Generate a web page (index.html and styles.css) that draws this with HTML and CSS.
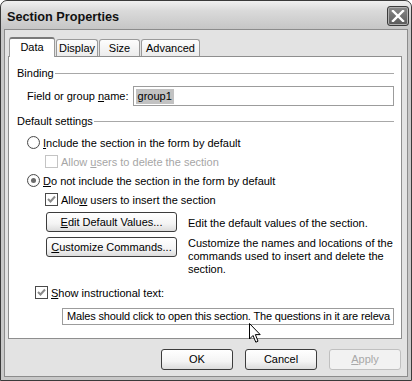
FILE: index.html
```html
<!DOCTYPE html>
<html>
<head>
<meta charset="utf-8">
<link rel="stylesheet" href="styles.css">
</head>
<body>
<div class="window">
  <div class="titlebar">
    <span class="title">Section Properties</span>
    <span class="close"><svg width="14" height="12" viewBox="0 0 14 12"><path d="M2 1 L12 11 M12 1 L2 11" stroke="#fff" stroke-width="2.4" stroke-linecap="square" fill="none"/></svg></span>
  </div>
  <div class="client">
    <div class="tabs">
      <div class="tab active t-data">Data</div>
      <div class="tab t-display">Display</div>
      <div class="tab t-size">Size</div>
      <div class="tab t-adv">Advanced</div>
    </div>
    <div class="panel">
      <div class="group">Binding</div>
      <div class="field-row">
        <span class="field-label">Field or group <u>n</u>ame:</span>
        <div class="input"><span class="sel">group1</span></div>
      </div>
      <div class="group group-default">Default settings</div>
      <div class="options">
        <div class="opt"><span class="radio"></span><span><u>I</u>nclude the section in the form by default</span></div>
        <div class="opt sub disabled"><span class="check"></span><span>Allow <u>u</u>sers to delete the section</span></div>
        <div class="opt"><span class="radio on"></span><span><u>D</u>o not include the section in the form by default</span></div>
        <div class="opt sub"><span class="check on"><svg width="11" height="11" viewBox="0 0 11 11"><path d="M2 5 L4.5 7.5 L9 2.5" stroke="#8a8a8a" stroke-width="2" fill="none"/></svg></span><span>Allo<u>w</u> users to insert the section</span></div>
      </div>
      <div class="cmds">
        <button class="btn"><u>E</u>dit Default Values...</button>
        <p class="desc desc-one">Edit the default values of the section.</p>
        <button class="btn"><u>C</u>ustomize Commands...</button>
        <p class="desc">Customize the names and locations of the commands used to insert and delete the section.</p>
      </div>
      <div class="opt sub show"><span class="check on"><svg width="11" height="11" viewBox="0 0 11 11"><path d="M2 5 L4.5 7.5 L9 2.5" stroke="#8a8a8a" stroke-width="2" fill="none"/></svg></span><span><u>S</u>how instructional text:</span></div>
      <div class="textbox"><span class="tb-text">Males should click to open this section. The questions in it are releva</span></div>
    </div>
    <div class="footer">
      <button class="btn dlg">OK</button>
      <button class="btn dlg">Cancel</button>
      <button class="btn dlg off"><u>A</u>pply</button>
    </div>
  </div>
  <svg class="cursor" width="13" height="21" viewBox="0 0 13 21"><path d="M0.5 0.5 L0.5 16 L4 12.5 L6.8 19.2 L9 18.2 L6.4 11.6 L11.2 11.6 Z" fill="#fff" stroke="#000" stroke-width="1"/></svg>
</div>
</body>
</html>
```
FILE: styles.css
```css
* { box-sizing: border-box; }
body {
  margin: 0;
  background: #fff;
  font-family: "Liberation Sans", Arial, sans-serif;
  font-size: 11px;
  color: #000;
}
.window {
  position: relative;
  width: 412px;
  height: 381px;
  border: 1px solid #3a3a3a;
  border-radius: 7px 7px 0 0;
  background: #c8c8c8;
  display: flex;
  flex-direction: column;
  padding: 0 3px 3px;
  overflow: hidden;
}
.titlebar {
  height: 28px;
  margin: 0 -3px;
  padding: 0 2px 0 6px;
  display: flex;
  align-items: center;
  justify-content: space-between;
  background: linear-gradient(#f0f0f0 0%, #dadada 35%, #c6c6c6 100%);
  border-radius: 6px 6px 0 0;
}
.title {
  font-weight: bold;
  font-size: 12.7px;
  line-height: 15px;
  margin-top: 5px;
  color: #111;
}
.close {
  width: 22px;
  height: 20px;
  margin-top: 2px;
  border: 1px solid #3c3c3c;
  border-radius: 3px;
  background: linear-gradient(#8a8a8a, #5a5a5a);
  box-shadow: inset 0 0 0 1px #b0b0b0;
  display: flex;
  align-items: center;
  justify-content: center;
}
.client {
  flex: 1;
  background: #e3e3e3;
  border: 1px solid #8c8c8c;
  padding: 7px 5px 0 3px;
  display: flex;
  flex-direction: column;
}
.tabs {
  display: flex;
  align-items: flex-end;
  gap: 1px;
  height: 19px;
  padding-left: 1px;
  position: relative;
  z-index: 1;
}
.tab {
  height: 17px;
  border: 1px solid #9a9a9a;
  border-bottom: none;
  border-radius: 3px 3px 0 0;
  background: linear-gradient(#fdfdfd, #ececec);
  display: flex;
  align-items: center;
  justify-content: center;
  line-height: 13px;
}
.tab.active {
  height: 20px;
  margin-bottom: -1px;
  background: #fff;
  border-top: 2px solid #7a7a7a;
  padding-bottom: 2px;
}
.t-data { width: 46px; }
.t-display { width: 42px; }
.t-size { width: 41px; }
.t-adv { width: 59px; }
.panel {
  height: 283px;
  background: #fff;
  border: 1px solid #8e8e8e;
  padding: 9px 7px 0 8px;
  display: flex;
  flex-direction: column;
}
.group {
  display: flex;
  align-items: center;
  gap: 1px;
  height: 14px;
  line-height: 14px;
}
.group::after {
  content: "";
  flex: 1;
  border-top: 1px solid #a8a8a8;
}
.group-default { margin-top: 8px; }
.field-row {
  display: flex;
  align-items: center;
  gap: 4px;
  margin-top: 6px;
  margin-left: 10px;
}
.input {
  flex: 1;
  height: 20px;
  border: 1px solid #9c9c9c;
  padding-left: 2px;
  display: flex;
  align-items: center;
}
.sel {
  background: #c2c2c2;
  padding: 1px 2px;
  line-height: 13px;
}
.options {
  margin-top: 5px;
  margin-left: 10px;
  display: flex;
  flex-direction: column;
}
.opt {
  height: 19px;
  display: flex;
  align-items: center;
  gap: 3px;
}
.opt.sub { margin-left: 18px; }
.opt.disabled { color: #a6a6a6; }
.radio {
  width: 13px;
  height: 13px;
  border-radius: 50%;
  border: 1px solid #4a4a4a;
  background: radial-gradient(circle, #fff 50%, #e6e6e6 100%);
  display: flex;
  align-items: center;
  justify-content: center;
}
.radio.on::after {
  content: "";
  width: 5px;
  height: 5px;
  border-radius: 50%;
  background: #6a6a6a;
}
.check {
  width: 13px;
  height: 13px;
  border: 1px solid #4a4a4a;
  background: #fff;
  display: flex;
  align-items: center;
  justify-content: center;
}
.disabled .check { border-color: #c4c4c4; }
.cmds {
  display: grid;
  grid-template-columns: 131px 1fr;
  column-gap: 11px;
  row-gap: 5px;
  margin-top: 3px;
  margin-left: 29px;
}
.btn {
  font-family: "Liberation Sans", Arial, sans-serif;
  font-size: 11px;
  color: #000;
  height: 20px;
  padding: 0;
  border: 1px solid #3c3c3c;
  border-radius: 3px;
  background: linear-gradient(#ffffff 0%, #f4f4f4 60%, #dcdcdc 100%);
  line-height: 13px;
}
.desc {
  margin: 0;
  line-height: 13px;
}
.desc-one { align-self: center; margin-top: 2px; }
.show { margin-top: 7px; margin-left: 28px; }
.textbox {
  margin-top: 6px;
  margin-left: 45px;
  height: 17px;
  border: 1px solid #9c9c9c;
  padding-left: 4px;
  line-height: 15px;
  white-space: nowrap;
  overflow: hidden;
}
.tb-text {
  letter-spacing: -0.16px;
}
.footer {
  display: flex;
  justify-content: flex-end;
  gap: 12px;
  margin-top: 10px;
  padding-right: 1px;
}
.btn.dlg {
  width: 72px;
  height: 21px;
}
.btn.off {
  color: #a8a8a8;
  border-color: #c0c0c0;
  background: #f2f2f2;
}
.cursor {
  position: absolute;
  left: 248px;
  top: 322px;
}
```
